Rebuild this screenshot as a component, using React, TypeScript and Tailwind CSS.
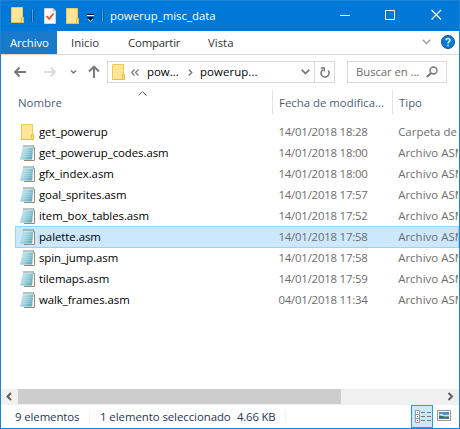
import React from 'react';

const files = [
  { name: 'get_powerup', date: '14/01/2018 18:28', type: 'Carpeta de', folder: true },
  { name: 'get_powerup_codes.asm', date: '14/01/2018 18:00', type: 'Archivo ASM' },
  { name: 'gfx_index.asm', date: '14/01/2018 18:00', type: 'Archivo ASM' },
  { name: 'goal_sprites.asm', date: '14/01/2018 17:57', type: 'Archivo ASM' },
  { name: 'item_box_tables.asm', date: '14/01/2018 17:52', type: 'Archivo ASM' },
  { name: 'palette.asm', date: '14/01/2018 17:58', type: 'Archivo ASM', selected: true },
  { name: 'spin_jump.asm', date: '14/01/2018 17:58', type: 'Archivo ASM' },
  { name: 'tilemaps.asm', date: '14/01/2018 17:59', type: 'Archivo ASM' },
  { name: 'walk_frames.asm', date: '04/01/2018 11:34', type: 'Archivo ASM' },
];

function Folder({ className = '' }: { className?: string }) {
  return (
    <svg className={`h-4 w-[13px] shrink-0 ${className}`} viewBox="0 0 13 16">
      <path d="M.5.5h11v10h1v5H.5z" fill="#ffe596" stroke="#edcb58" />
      <path d="M10.5 15V10.5h2v5h-2z" fill="#ffe07c" stroke="#e9c03e" />
      <path d="M0 15.5h13" stroke="#e9c03e" />
    </svg>
  );
}

function Notepad() {
  return (
    <svg className="h-4 w-4 shrink-0" viewBox="0 0 16 16">
      <defs>
        <linearGradient id="page" x1="0" y1="0" x2="1" y2="0.5">
          <stop offset="0" stopColor="#d3f0f5" />
          <stop offset="0.5" stopColor="#a3d6e1" />
          <stop offset="1" stopColor="#63aabb" />
        </linearGradient>
      </defs>
      <path d="M4 15.5h10.500V2.500H13" fill="#fff" stroke="#9b8b6c" />
      <path d="M3.500 2h9.800L12 14.500H.2z" fill="url(#page)" stroke="#9bcbd6" strokeWidth=".4" />
      <path d="M3.300 5.500h9M3 7.500h9M2.500 9.500h9.200M2 11.500h9.500" stroke="#c6e9ef" strokeWidth=".5" opacity=".7" />
      <path d="M3.500 1h1M5.500 1h1M7.500 1h1M9.500 1h1M11.500 1h1M13 1h.7" stroke="#4b6066" strokeWidth="1.500" />
      <path d="M4 2.300h9" stroke="#e2f4f7" strokeWidth=".6" />
    </svg>
  );
}

function TitleBar() {
  return (
    <div className="flex h-[31px] items-start border-t border-[#1883d7] bg-[#0078d7] pl-[10px]">
      <Folder className="mt-[6px]" />
      <div className="mt-[8px] ml-[7px] h-[13px] w-[3px] border-x border-[#0c5fa5] bg-[#4b9ee0]" />
      <svg className="mt-[7px] ml-[10px] h-4 w-3" viewBox="0 0 12 16">
        <path d="M.5.5H9l2.500 2.500v12.500H.5z" fill="#fafafa" stroke="#d6d0ca" />
        <path d="M9 .5V3h2.500" fill="none" stroke="#bbb" />
        <path d="M2.500 8l2.700 2.800L9.500 5.500" fill="none" stroke="#e0532b" strokeWidth="1.800" />
      </svg>
      <Folder className="mt-[7px] ml-[10px]" />
      <svg className="mt-[13px] ml-[8px] h-[8px] w-[7px]" viewBox="0 0 7 8">
        <path d="M0 .5h7" stroke="#000" />
        <path d="M0 1.500h7" stroke="#fff" />
        <path d="M0 3h7L3.500 6.500z" fill="#000" />
        <path d="M1 5.200l2.500 2.300L6 5.200" fill="none" stroke="#fff" strokeWidth=".7" />
      </svg>
      <div className="mt-[8px] ml-[7px] h-[13px] w-[3px] border-x border-[#0c5fa5] bg-[#4b9ee0]" />
      <span className="mt-[7px] ml-[6px] flex-1 text-[11.4px] leading-4 text-white">powerup_misc_data</span>
      <svg className="mt-[8px] mr-[16px] h-3 w-[103px]" viewBox="0 0 103 12" fill="none" stroke="#fff">
        <path d="M0 6.500h10M45.500 1.500h9v9h-9z" />
        <path d="M91.500 1l9.500 9.500M101 1l-9.500 9.500" strokeWidth="1.200" />
      </svg>
    </div>
  );
}

function Ribbon() {
  return (
    <div className="flex h-6 items-start border-b border-[#dadbdc] text-[11.4px] leading-[23px] text-[#333]">
      <div className="h-[23px] w-[56px] bg-[#1979ca] pl-[9px] tracking-[-0.15px] text-white">Archivo</div>
      <span className="w-[57px] pl-[14px]">Inicio</span>
      <span className="w-[80px] pl-[14px] tracking-[-0.2px]">Compartir</span>
      <span className="flex-1 pl-[14px]">Vista</span>
      <svg className="mt-[8px] mr-[10px] h-[6px] w-[9px]" viewBox="0 0 9 6">
        <path d="M.7.7l3.800 3.800L8.300.7" fill="none" stroke="#a3a3a3" strokeWidth="1.500" />
      </svg>
      <svg className="mt-[4px] mr-[4px] h-[14px] w-[14px]" viewBox="0 0 14 14">
        <circle cx="7" cy="7" r="6.500" fill="#087bd4" stroke="#114f91" />
        <path d="M5 5.300C5 3 9.200 3 9 5.300 8.900 6.700 7 6.500 7 8.500M7 9.700v1.500" fill="none" stroke="#e2f1ff" strokeWidth="1.500" />
      </svg>
    </div>
  );
}

function NavigationBar() {
  return (
    <div className="flex h-[35px] items-start pt-[6px] text-[11.4px]">
      <svg className="h-[22px] w-[106px]" viewBox="1 61 106 22" fill="none">
        <path d="M15 72h11M19.500 67.500L15 72l4.500 4.500" stroke="#777" strokeWidth="1.800" />
        <path d="M44 72h11M50.500 67.500L55 72l-4.500 4.500" stroke="#d9d9d9" strokeWidth="1.800" />
        <path d="M71 70.500l2.500 2.500 2.500-2.500" stroke="#777" strokeWidth="1.500" />
        <path d="M94 78V67M89 71.500l5-5 5 5" stroke="#777" strokeWidth="1.900" />
      </svg>
      <div className="flex h-[22px] w-[228px] items-center border border-[#d9d9d9] text-black">
        <Folder className="ml-[4px]" />
        <svg className="ml-[6px] h-[7px] w-[8px]" viewBox="0 0 8 7" fill="none" stroke="#777" strokeWidth="1.200">
          <path d="M3.500.5l-3 3 3 3M7.500.5l-3 3 3 3" />
        </svg>
        <span className="ml-[8px] w-[41px]">pow...</span>
        <svg className="h-[7px] w-[5px]" viewBox="0 0 5 7" fill="none" stroke="#777" strokeWidth="1.400">
          <path d="M.8.500l3 3-3 3" />
        </svg>
        <span className="ml-[7px] flex-1 tracking-[0.1px]">powerup...</span>
        <svg className="mr-[4px] h-[6px] w-[9px]" viewBox="0 0 9 6" fill="none" stroke="#777" strokeWidth="1.700">
          <path d="M.7.7l3.800 3.800L8.300.7" />
        </svg>
        <div className="flex h-full w-[20px] items-center border-l border-[#d9d9d9] pl-[5px]">
          <svg className="h-[11px] w-[10px]" viewBox="0 0 10 11" fill="none" stroke="#777" strokeWidth="1.500">
            <path d="M2.800 2.700A4 4 0 1 0 8.200 3.500M.8 1h3.500v3.500" />
          </svg>
        </div>
      </div>
      <div className="ml-3 flex h-[22px] w-[100px] items-center border border-[#d9d9d9] pl-[8px] text-[#6d6d6d]">
        <span className="w-[70px] tracking-[-0.1px] whitespace-nowrap">Buscar en ...</span>
        <svg className="h-3 w-3" viewBox="0 0 12 12" fill="none" stroke="#777">
          <circle cx="7.500" cy="4.500" r="3.500" strokeWidth="1.400" />
          <path d="M5 7L.8 11" strokeWidth="2" />
        </svg>
      </div>
    </div>
  );
}

function FileList() {
  return (
    <div className="flex-1 overflow-hidden text-[11.4px]">
      <div className="flex h-[31px] leading-[25px] text-[#4c607a]">
        <span className="w-[120px] pl-[17px]">Nombre</span>
        <svg className="mt-px h-[5px] w-[151px]" viewBox="-17 0 151 5" fill="none" stroke="#6d6d6d">
          <path d="M.5 4.500l4-4 4 4" />
        </svg>
        <span className="h-[25px] w-[120px] border-l border-[#e5e5e5] pl-[6px]">Fecha de modifica...</span>
        <span className="h-[25px] flex-1 border-l border-[#e5e5e5] pl-[6px]">Tipo</span>
      </div>
      {files.map((f) => (
        <div
          key={f.name}
          className={`ml-[14px] flex items-center border whitespace-nowrap ${
            f.selected ? '-mb-px h-[22px] border-[#99d1ff] bg-[#cce8ff]' : 'h-[21px] border-transparent'
          }`}
        >
          <span className="flex w-[23px] pl-[4px]">{f.folder ? <Folder className="ml-px" /> : <Notepad />}</span>
          <span className="w-[240px] tracking-[-0.05px] text-black">{f.name}</span>
          <span className="w-[120px] tracking-[-0.2px] text-[#6d6d6d]">{f.date}</span>
          <span className="w-[60px] overflow-hidden tracking-[0.05px] text-[#6d6d6d]">{f.type}</span>
        </div>
      ))}
    </div>
  );
}

function HorizontalScrollbar() {
  return (
    <div className="flex h-4 items-start bg-[#f0f0f0]">
      <svg className="h-4 w-[17px]" viewBox="0 0 17 16" fill="none" stroke="#606060" strokeWidth="2">
        <path d="M10 4L6.500 7.500 10 11" />
      </svg>
      <div className="h-[15px] w-[323px] bg-[#cdcdcd]" />
      <div className="flex-1" />
      <svg className="h-4 w-[17px]" viewBox="0 0 17 16" fill="none" stroke="#606060" strokeWidth="2">
        <path d="M6.500 4L10 7.500 6.500 11" />
      </svg>
    </div>
  );
}

function StatusBar() {
  return (
    <div className="flex h-[23px] items-start text-[11.4px] leading-[23px] text-[#26365d]">
      <span className="w-[88px] pl-[14px] tracking-[-0.1px]">9 elementos</span>
      <div className="mt-[6px] h-[11px] w-px bg-[#f0f0f0]" />
      <span className="w-[141px] pl-[10px] tracking-[-0.05px] whitespace-nowrap">1 elemento seleccionado</span>
      <span className="w-[54px] pl-[6px] tracking-[-0.2px] whitespace-nowrap">4.66 KB</span>
      <div className="mt-[6px] h-[11px] w-px bg-[#f0f0f0]" />
      <div className="flex-1" />
      <div className="h-[23px] w-[22px] border border-[#26a0da] bg-[#cbe8f6]">
        <svg className="h-[21px] w-5" viewBox="412 406 20 21" fill="none">
          <path d="M415.500 410.500h4v12h-4zM415.500 414.500h4M415.500 418.500h4" fill="#fff" stroke="#9a9a9a" />
          <path d="M421 412.500h4M427 412.500h4M421 416.500h4M427 416.500h4M421 420.500h4M427 420.500h4" stroke="#777" />
          <path d="M417 412.500h1" stroke="#4b91d1" />
          <path d="M417 416.500h1" stroke="#248bcc" />
          <path d="M417 420.500h1" stroke="#d22" />
        </svg>
      </div>
      <svg className="mt-[5px] mr-[8px] ml-[4px] h-[11px] w-[14px]" viewBox="0 0 14 11">
        <path d="M.5.5h13v10H.5z" fill="#fff" stroke="#999" />
        <path d="M2 2h10v7H2z" fill="#4a90d2" />
        <path d="M2 4.500c3-2 4 0 5 .5s3-.5 5 0V7H2z" fill="#cfe5f4" />
        <path d="M2 5.500c3 0 4 1.500 10 1v1.200H2z" fill="#38684b" />
        <path d="M2 7.700h10V9H2z" fill="#4478a9" />
      </svg>
    </div>
  );
}

export default function App() {
  return (
    <div className="flex h-[429px] w-[460px] flex-col overflow-hidden border-x border-b border-[#1883d7] bg-white font-['Open_Sans','Noto_Sans',sans-serif]">
      <TitleBar />
      <Ribbon />
      <NavigationBar />
      <FileList />
      <HorizontalScrollbar />
      <StatusBar />
    </div>
  );
}
